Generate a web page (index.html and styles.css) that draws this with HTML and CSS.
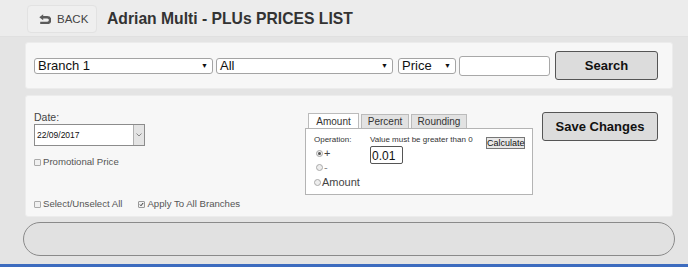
FILE: index.html
```html
<!DOCTYPE html>
<html>
<head>
<meta charset="utf-8">
<link rel="stylesheet" href="styles.css">
</head>
<body>
<header class="topbar">
  <button class="back-btn">
    <svg class="back-icon" width="12" height="10" viewBox="0 0 12 10"><path d="M0.3 3.2 L4.2 0.2 L4.2 6.2 Z" fill="#5a5a5a"/><path d="M3.5 3.2 H8.2 A2.9 2.9 0 0 1 8.2 9 H1.2" fill="none" stroke="#5a5a5a" stroke-width="2.4"/></svg>
    <span>BACK</span>
  </button>
  <h1 class="title">Adrian Multi - PLUs PRICES LIST</h1>
</header>
<main class="content">
  <section class="panel search-panel">
    <span class="sel sel-branch"><span>Branch 1</span><span class="arrow">▼</span></span>
    <span class="sel sel-all"><span>All</span><span class="arrow">▼</span></span>
    <span class="sel sel-price"><span>Price</span><span class="arrow">▼</span></span>
    <input class="text-input" type="text">
    <button class="btn search-btn">Search</button>
  </section>
  <section class="panel edit-panel">
    <div class="left-col">
      <label class="date-label">Date:</label>
      <div class="date-input"><span class="date-text">22/09/2017</span><span class="date-drop"><svg width="6" height="4" viewBox="0 0 6 4"><path d="M0.5 0.5 L3 3 L5.5 0.5" fill="none" stroke="#888" stroke-width="1"/></svg></span></div>
      <div class="check-row promo"><span class="cb"></span>Promotional Price</div>
      <div class="bottom-checks">
        <div class="check-row"><span class="cb"></span>Select/Unselect All</div>
        <div class="check-row apply"><span class="cb checked"><svg width="7" height="7" viewBox="0 0 7 7"><path d="M1.3 3.6 L2.8 5.2 L5.8 1.4" fill="none" stroke="#222" stroke-width="1.3"/></svg></span>Apply To All Branches</div>
      </div>
    </div>
    <div class="tabs">
      <div class="tab-bar">
        <span class="tab active">Amount</span>
        <span class="tab">Percent</span>
        <span class="tab">Rounding</span>
      </div>
      <div class="tab-body">
        <div class="op-col">
          <div class="small-label">Operation:</div>
          <div class="radio-row plus"><span class="radio on"></span>+</div>
          <div class="radio-row minus"><span class="radio"></span>-</div>
          <div class="radio-row amount"><span class="radio"></span>Amount</div>
        </div>
        <div class="val-col">
          <div class="small-label">Value must be greater than 0</div>
          <div class="value-input">0.01</div>
        </div>
        <button class="calc-btn">Calculate</button>
      </div>
    </div>
    <button class="btn save-btn">Save Changes</button>
  </section>
  <div class="round-box"></div>
</main>
<div class="blue-line"></div>
</body>
</html>
```
FILE: styles.css
```css
* { box-sizing: border-box; }
html, body { margin: 0; padding: 0; }
body {
  background: #e4e4e4;
  font-family: "Liberation Sans", Arial, sans-serif;
  color: #333;
  width: 688px;
  height: 267px;
  overflow: hidden;
}
.topbar {
  height: 37px;
  background: #ececec;
  border-bottom: 1px solid #e0e0e0;
  display: flex;
  align-items: flex-start;
  padding: 5px 0 0 27px;
}
.back-btn {
  width: 70px;
  height: 28px;
  border: 1px solid #e2e2e2;
  border-radius: 4px;
  background: #efefef;
  display: flex;
  align-items: center;
  padding: 0 0 0 11px;
  gap: 6px;
  font-family: "Liberation Sans", Arial, sans-serif;
  font-size: 11.5px;
  color: #444;
}
.back-icon { display: block; margin-top: 0; }
.title {
  margin: 0 0 0 10px;
  font-size: 15.7px;
  font-weight: bold;
  color: #333;
  line-height: 28px;
}
.content {
  margin: 5px 15px 0 25px;
  width: 648px;
}
.panel {
  background: #f7f7f7;
  border-radius: 3px;
  border: 1px solid #ececec;
}
.search-panel {
  height: 47px;
  display: flex;
  align-items: center;
  padding: 0 0 0 8px;
}
.sel {
  display: flex;
  align-items: center;
  justify-content: space-between;
  height: 16px;
  border: 1px solid #a4a4a4;
  border-radius: 3px;
  background: #fff;
  font-size: 13px;
  color: #111;
  padding: 0 4px 0 3px;
  line-height: 14px;
}
.sel .arrow { font-size: 7px; color: #111; }
.sel-branch { width: 179px; }
.sel-all { width: 177px; margin-left: 3px; }
.sel-price { width: 58px; margin-left: 5px; }
.text-input {
  width: 91px;
  height: 20px;
  margin: 0 0 0 3px;
  border: 1px solid #a8a8a8;
  border-radius: 3px;
  background: #fff;
  padding: 0;
}
.btn {
  background: #dcdcdc;
  border: 1px solid #555;
  border-radius: 3px;
  font-family: "Liberation Sans", Arial, sans-serif;
  font-weight: bold;
  font-size: 13px;
  color: #111;
  padding: 0;
}
.search-btn {
  width: 103px;
  height: 29px;
  margin-left: 5px;
}
.edit-panel {
  margin-top: 6px;
  height: 122px;
  display: flex;
  align-items: flex-start;
  padding: 0 0 0 8px;
}
.left-col {
  width: 271px;
  display: flex;
  flex-direction: column;
  padding-top: 16px;
  height: 120px;
}
.date-label { font-size: 10.5px; color: #444; line-height: 11px; }
.date-input {
  margin-top: 1px;
  width: 111px;
  height: 22px;
  border: 1px solid #8c8c8c;
  background: #fff;
  display: flex;
  align-items: center;
  justify-content: space-between;
}
.date-text { font-size: 8.5px; color: #111; padding-left: 2px; }
.date-drop {
  width: 11px;
  height: 20px;
  background: #e4e4e4;
  border-left: 1px solid #b0b0b0;
  display: flex;
  align-items: center;
  justify-content: center;
}
.check-row {
  display: flex;
  align-items: center;
  font-size: 9.6px;
  color: #555;
  line-height: 12px;
}
.promo { margin-top: 10px; }
.cb {
  width: 7px;
  height: 7px;
  border: 1px solid #aaa;
  border-radius: 1px;
  background: #f0f0f0;
  margin-right: 2px;
  display: flex;
  align-items: center;
  justify-content: center;
}
.cb svg { display: block; }
.cb.checked { border-color: #999; }
.bottom-checks {
  display: flex;
  margin-top: 30px;
  gap: 16px;
}
.tabs {
  margin-top: 17px;
  width: 228px;
}
.tab-bar {
  display: flex;
  padding-left: 3px;
  gap: 2px;
  height: 15px;
}
.tab {
  font-size: 10px;
  color: #333;
  background: #e2e2e2;
  border: 1px solid #bbb;
  border-bottom: none;
  height: 14px;
  margin-top: 1px;
  display: flex;
  align-items: center;
  justify-content: center;
}
.tab:nth-child(1) { width: 51px; }
.tab:nth-child(2) { width: 48px; }
.tab:nth-child(3) { width: 56px; }
.tab.active {
  background: #fff;
  height: 15px;
  margin-top: 0;
  margin-bottom: -1px;
  position: relative;
  z-index: 1;
}
.tab-body {
  border: 1px solid #b4b4b4;
  background: #fff;
  height: 67px;
  display: flex;
  padding: 6px 0 0 8px;
}
.small-label { font-size: 8px; color: #333; line-height: 10px; }
.op-col { width: 56px; }
.radio-row {
  display: flex;
  align-items: center;
  font-size: 11px;
  color: #444;
  line-height: 13px;
}
.radio {
  width: 7px;
  height: 7px;
  border-radius: 50%;
  border: 1px solid #aaa;
  background: #eee;
  margin-right: 1px;
  display: flex;
  align-items: center;
  justify-content: center;
}
.radio.on::after {
  content: "";
  width: 3px;
  height: 3px;
  border-radius: 50%;
  background: #555;
}
.plus { margin-top: 2px; margin-left: 2px; }
.minus { margin-top: 1px; margin-left: 2px; color: #888; }
.amount { margin-top: 2px; }
.val-col { width: 116px; }
.value-input {
  margin-top: 1px;
  width: 33px;
  height: 18px;
  border: 1px solid #555;
  border-radius: 2px;
  font-size: 12px;
  color: #111;
  padding: 2px 0 0 1px;
  line-height: 14px;
}
.calc-btn {
  margin-top: 2px;
  width: 39px;
  height: 12px;
  border: 1px solid #777;
  background: #e8e8e8;
  font-family: "Liberation Sans", Arial, sans-serif;
  font-size: 9px;
  color: #111;
  padding: 0;
  line-height: 10px;
}
.save-btn {
  margin: 16px 0 0 9px;
  width: 116px;
  height: 29px;
}
.round-box {
  margin: 5px -2px 0 -2px;
  height: 34px;
  border: 1px solid #8a8a8a;
  border-radius: 17px;
  background: #e1e1e1;
}
.blue-line {
  margin-top: 8px;
  height: 4px;
  background: #3d6cbf;
}
```
